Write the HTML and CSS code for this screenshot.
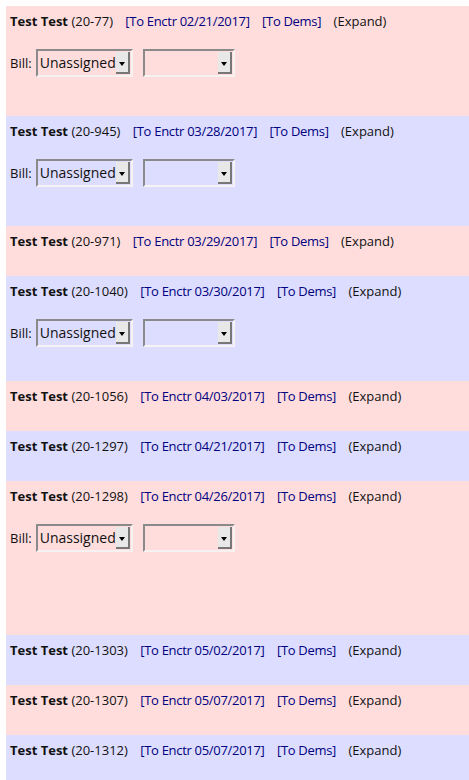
FILE: index.html
```html
<!DOCTYPE html>
<html lang="en">
<head>
    <meta charset="UTF-8">
    <title>Encounters</title>
    <link rel="stylesheet" href="styles.css">
</head>
<body>
    <div class="list">
        <div class="row pink">
            <div class="row-head">
                <b>Test Test</b> (20-77)
                <a class="lnk">[To Enctr 02/21/2017]</a>
                <a class="lnk">[To Dems]</a>
                <span class="expand">(Expand)</span>
            </div>
            <div class="row-body body-a">
                Bill:
                <span class="select sel-bill"><span class="val">Unassigned</span><span class="btn"></span></span>
                <span class="select sel-other"><span class="val"></span><span class="btn"></span></span>
            </div>
        </div>
        <div class="row blue">
            <div class="row-head">
                <b>Test Test</b> (20-945)
                <a class="lnk">[To Enctr 03/28/2017]</a>
                <a class="lnk">[To Dems]</a>
                <span class="expand">(Expand)</span>
            </div>
            <div class="row-body body-a">
                Bill:
                <span class="select sel-bill"><span class="val">Unassigned</span><span class="btn"></span></span>
                <span class="select sel-other"><span class="val"></span><span class="btn"></span></span>
            </div>
        </div>
        <div class="row pink">
            <div class="row-head">
                <b>Test Test</b> (20-971)
                <a class="lnk">[To Enctr 03/29/2017]</a>
                <a class="lnk">[To Dems]</a>
                <span class="expand">(Expand)</span>
            </div>
        </div>
        <div class="row blue">
            <div class="row-head">
                <b>Test Test</b> (20-1040)
                <a class="lnk">[To Enctr 03/30/2017]</a>
                <a class="lnk">[To Dems]</a>
                <span class="expand">(Expand)</span>
            </div>
            <div class="row-body body-b">
                Bill:
                <span class="select sel-bill"><span class="val">Unassigned</span><span class="btn"></span></span>
                <span class="select sel-other"><span class="val"></span><span class="btn"></span></span>
            </div>
        </div>
        <div class="row pink">
            <div class="row-head">
                <b>Test Test</b> (20-1056)
                <a class="lnk">[To Enctr 04/03/2017]</a>
                <a class="lnk">[To Dems]</a>
                <span class="expand">(Expand)</span>
            </div>
        </div>
        <div class="row blue">
            <div class="row-head">
                <b>Test Test</b> (20-1297)
                <a class="lnk">[To Enctr 04/21/2017]</a>
                <a class="lnk">[To Dems]</a>
                <span class="expand">(Expand)</span>
            </div>
        </div>
        <div class="row pink">
            <div class="row-head">
                <b>Test Test</b> (20-1298)
                <a class="lnk">[To Enctr 04/26/2017]</a>
                <a class="lnk">[To Dems]</a>
                <span class="expand">(Expand)</span>
            </div>
            <div class="row-body body-c">
                Bill:
                <span class="select sel-bill"><span class="val">Unassigned</span><span class="btn"></span></span>
                <span class="select sel-other"><span class="val"></span><span class="btn"></span></span>
            </div>
        </div>
        <div class="row blue">
            <div class="row-head">
                <b>Test Test</b> (20-1303)
                <a class="lnk">[To Enctr 05/02/2017]</a>
                <a class="lnk">[To Dems]</a>
                <span class="expand">(Expand)</span>
            </div>
        </div>
        <div class="row pink">
            <div class="row-head">
                <b>Test Test</b> (20-1307)
                <a class="lnk">[To Enctr 05/07/2017]</a>
                <a class="lnk">[To Dems]</a>
                <span class="expand">(Expand)</span>
            </div>
        </div>
        <div class="row blue">
            <div class="row-head">
                <b>Test Test</b> (20-1312)
                <a class="lnk">[To Enctr 05/07/2017]</a>
                <a class="lnk">[To Dems]</a>
                <span class="expand">(Expand)</span>
            </div>
        </div>
    </div>
</body>
</html>
```

FILE: styles.css
```css
body {
    margin: 6px 0 0 6px;
    font-family: "Open Sans", sans-serif;
    font-size: 13px;
    color: #111;
    background: #fff;
}
.row {
    min-height: 43px;
    padding: 7px 4px 0;
}
.pink {
    background: #ffdddd;
}
.blue {
    background: #ddddff;
}
.row-head {
    line-height: 16px;
    white-space: nowrap;
}
.lnk {
    color: #000080;
    margin-left: 9px;
    letter-spacing: -0.3px;
}
.expand {
    margin-left: 9px;
}
.row-body {
    display: flex;
    align-items: center;
    padding-top: 20px;
}
.body-a {
    padding-bottom: 39px;
}
.body-b {
    padding-bottom: 34px;
}
.body-c {
    padding-bottom: 83px;
}
.select {
    display: inline-flex;
    align-items: stretch;
    height: 24px;
    border-style: solid;
    border-width: 2px;
    border-color: #8a8a8a #f6f2f2 #f6f2f2 #8a8a8a;
    font-size: 14px;
    line-height: 24px;
    box-sizing: content-box;
}
.sel-bill {
    width: 93px;
    margin-left: 4px;
}
.sel-other {
    width: 88px;
    margin-left: 10px;
}
.val {
    flex: 1;
    padding-left: 2px;
    overflow: hidden;
    white-space: nowrap;
}
.btn {
    width: 12px;
    margin: 1px 1px 1px 0;
    background: #e8e8e8;
    border-right: 2px solid #777;
    border-bottom: 2px solid #777;
    position: relative;
}
.btn::after {
    content: "";
    position: absolute;
    left: 3px;
    top: 10px;
    border-left: 3px solid transparent;
    border-right: 3px solid transparent;
    border-top: 4px solid #000;
}
```
